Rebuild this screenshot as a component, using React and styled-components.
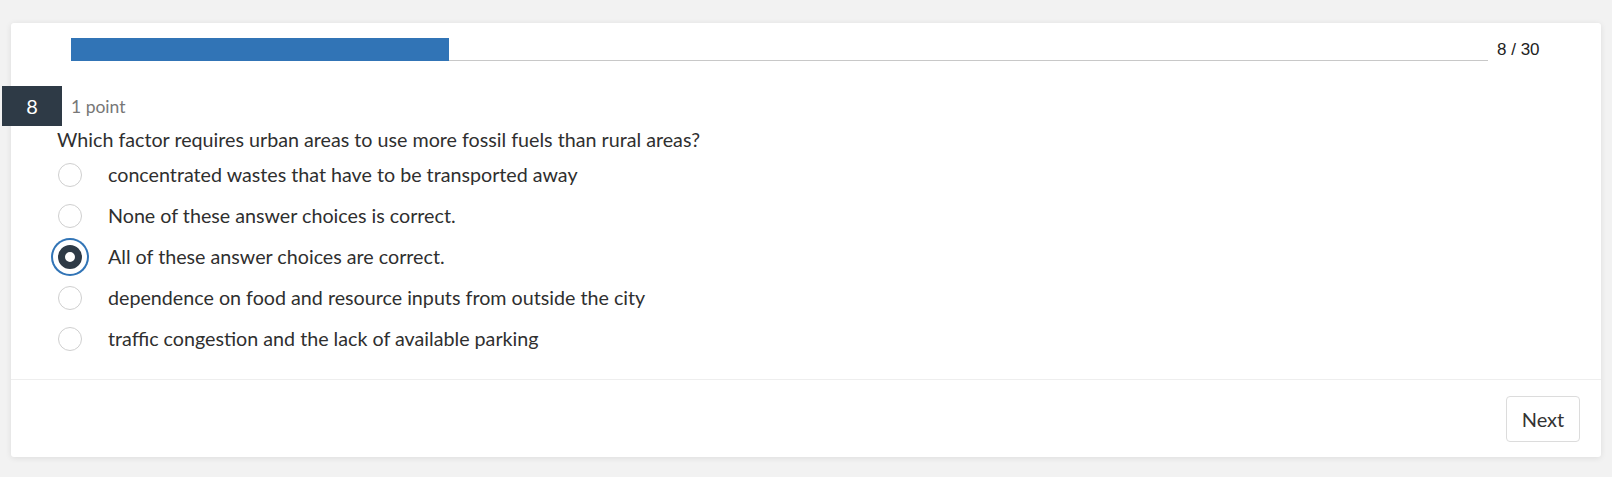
import React from "react";
import styled, { createGlobalStyle } from "styled-components";

const GlobalStyle = createGlobalStyle`
  html, body {
    margin: 0;
    padding: 0;
    background: #f2f2f2;
    font-family: Lato, "Open Sans", Arial, sans-serif;
    color: #333;
  }
`;

const Page = styled.div`
  padding: 23px 11px 20px 11px;
`;

const Card = styled.div`
  background: #fff;
  border-radius: 3px;
  box-shadow: 0 1px 6px rgba(0, 0, 0, 0.09);
  height: 434px;
  display: flex;
  flex-direction: column;
`;

const ProgressRow = styled.div`
  display: flex;
  align-items: center;
  padding: 15px 0 0 60px;
`;

const Track = styled.div`
  flex: 1;
  height: 23px;
  border-bottom: 1px solid #c8c8c8;
  box-sizing: border-box;
  display: flex;
`;

const Fill = styled.div`
  background: #3174b6;
  height: 23px;
`;

const Count = styled.div`
  width: 113px;
  padding-left: 9px;
  box-sizing: border-box;
  font-family: "Liberation Sans", Arial, sans-serif;
  font-size: 17px;
  color: #222;
`;

const Header = styled.div`
  display: flex;
  align-items: center;
  margin: 25px 0 0 -9px;
`;

const Badge = styled.div`
  width: 60px;
  height: 40px;
  background: #2e3a46;
  color: #fff;
  display: flex;
  align-items: center;
  justify-content: center;
  font-family: Lato, Arial, sans-serif;
  font-size: 20px;
`;

const Points = styled.div`
  margin-left: 9px;
  font-size: 17.5px;
  color: #777;
`;

const Question = styled.div`
  margin: 1px 0 0 46px;
  font-size: 19.7px;
  line-height: 26px;
  color: #2f2f2f;
`;

const Options = styled.div`
  margin: 1px 0 0 47px;
  display: flex;
  flex-direction: column;
`;

const Option = styled.label`
  display: flex;
  align-items: center;
  height: 41px;
  font-size: 19.7px;
  color: #2f2f2f;
  cursor: pointer;
`;

const Radio = styled.span`
  width: 24px;
  height: 24px;
  box-sizing: border-box;
  border-radius: 50%;
  background: #fff;
  border: ${(p) => (p.checked ? "7px solid #2e3a46" : "1px solid #cfcfcf")};
  box-shadow: ${(p) =>
    p.checked ? "0 0 0 5px #fff, 0 0 0 7px #3174b6" : "none"};
  margin-right: 26px;
  flex-shrink: 0;
`;

const Body = styled.div`
  flex: 1;
`;

const Footer = styled.div`
  border-top: 1px solid #eee;
  height: 78px;
  box-sizing: border-box;
  display: flex;
  align-items: center;
  justify-content: flex-end;
  padding-right: 21px;
`;

const NextButton = styled.button`
  width: 74px;
  height: 46px;
  background: #fff;
  border: 1px solid #dcdcdc;
  border-radius: 4px;
  font-family: Lato, "Open Sans", Arial, sans-serif;
  font-size: 20px;
  color: #333;
  cursor: pointer;
`;

const answers = [
  "concentrated wastes that have to be transported away",
  "None of these answer choices is correct.",
  "All of these answer choices are correct.",
  "dependence on food and resource inputs from outside the city",
  "traffic congestion and the lack of available parking",
];

export default function App() {
  const current = 8;
  const total = 30;
  const selected = 2;
  return (
    <Page>
      <GlobalStyle />
      <Card>
        <Body>
          <ProgressRow>
            <Track>
              <Fill style={{ width: `${(current / total) * 100}%` }} />
            </Track>
            <Count>
              {current} / {total}
            </Count>
          </ProgressRow>
          <Header>
            <Badge>{current}</Badge>
            <Points>1 point</Points>
          </Header>
          <Question>
            Which factor requires urban areas to use more fossil fuels than
            rural areas?
          </Question>
          <Options>
            {answers.map((a, i) => (
              <Option key={i}>
                <Radio checked={i === selected} />
                {a}
              </Option>
            ))}
          </Options>
        </Body>
        <Footer>
          <NextButton>Next</NextButton>
        </Footer>
      </Card>
    </Page>
  );
}
